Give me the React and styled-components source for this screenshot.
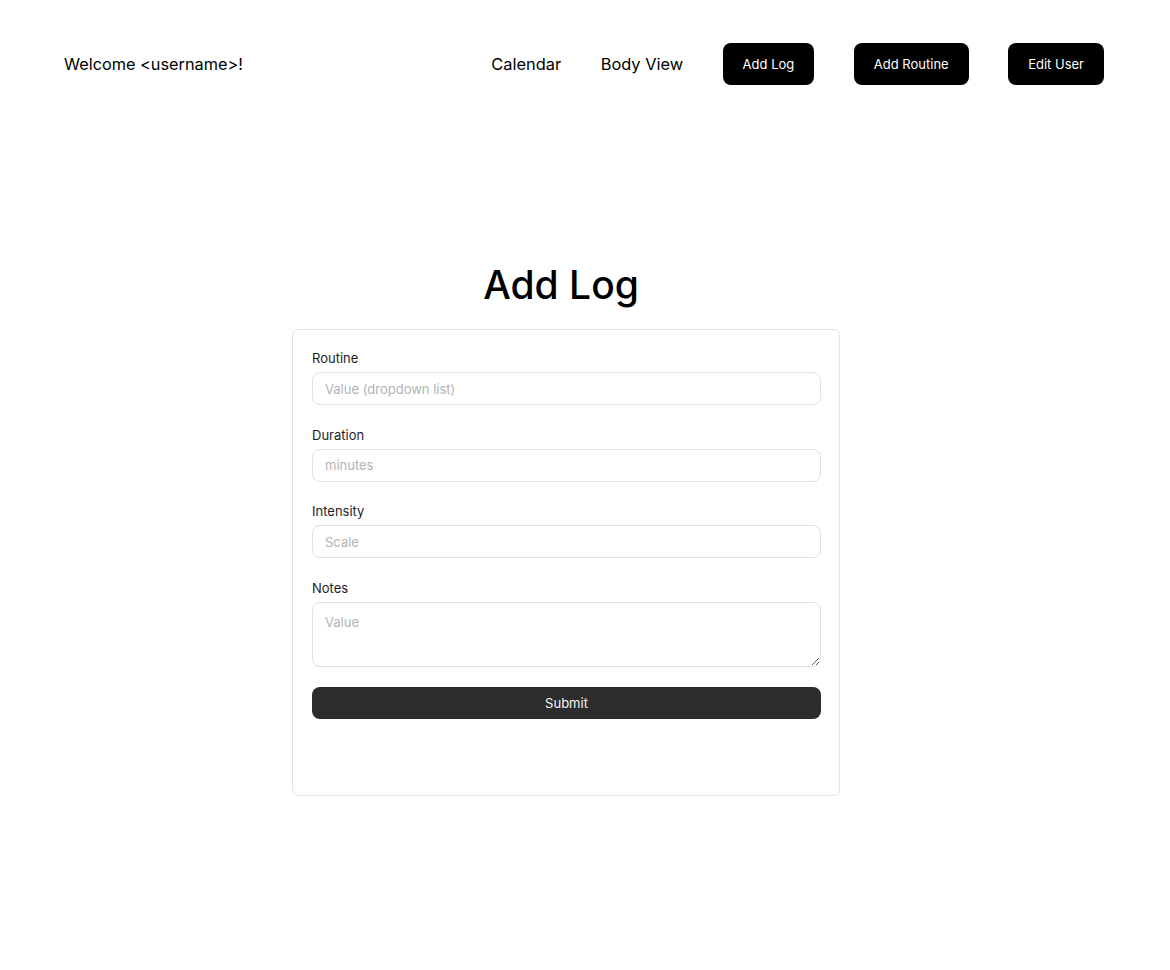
import React from 'react';
import styled, { createGlobalStyle } from 'styled-components';

const GlobalStyle = createGlobalStyle`
  * {
    box-sizing: border-box;
  }
  body {
    margin: 0;
    background: #ffffff;
    font-family: Inter, 'Noto Sans', sans-serif;
    color: #000000;
  }
`;

const Page = styled.div`
  width: 1170px;
  min-height: 970px;
  background: #ffffff;
`;

const Header = styled.header`
  display: flex;
  align-items: center;
  justify-content: space-between;
  height: 42px;
  margin-top: 43px;
  padding: 0 66px 0 64px;
`;

const Welcome = styled.span`
  font-size: 16.3px;
  line-height: 20px;
`;

const Nav = styled.nav`
  display: flex;
  align-items: center;
  gap: 39.5px;
`;

const NavLink = styled.a`
  font-size: 16.4px;
  line-height: 20px;
  color: #000000;
  text-decoration: none;
  cursor: pointer;
`;

const NavButton = styled.button`
  height: 42px;
  padding: 0 20px;
  border: none;
  border-radius: 8px;
  background: #000000;
  color: #ffffff;
  font-family: inherit;
  font-size: 13px;
  cursor: pointer;
`;

const Main = styled.main`
  display: flex;
  flex-direction: column;
  align-items: flex-start;
  margin-top: 176px;
  padding-left: 292px;
`;

const Title = styled.h1`
  width: 548px;
  margin: 0 0 20px;
  padding-right: 10px;
  text-align: center;
  font-size: 39px;
  line-height: 48px;
  font-weight: 500;
`;

const Card = styled.form`
  display: flex;
  flex-direction: column;
  width: 548px;
  height: 467px;
  padding: 18px 18px 0 19px;
  border: 1px solid #e3e3e3;
  border-radius: 6px;
`;

const Field = styled.div`
  display: flex;
  flex-direction: column;
  gap: 4px;
  margin-bottom: 19.67px;
`;

const Label = styled.label`
  font-size: 13px;
  line-height: 20px;
  color: #1e1e1e;
`;

const Input = styled.input`
  height: 33px;
  padding: 0 12px;
  border: 1px solid #e0e0e0;
  border-radius: 8px;
  font-family: inherit;
  font-size: 13px;
  color: #1e1e1e;
  outline: none;

  &::placeholder {
    color: #b3b3b3;
  }
`;

const TextArea = styled.textarea`
  height: 65px;
  padding: 11px 12px;
  border: 1px solid #e0e0e0;
  border-radius: 8px;
  font-family: inherit;
  font-size: 13px;
  line-height: 16px;
  color: #1e1e1e;
  outline: none;

  &::placeholder {
    color: #b3b3b3;
  }
`;

const Submit = styled.button`
  height: 32px;
  border: none;
  border-radius: 8px;
  background: #2c2c2c;
  color: #f5f5f5;
  font-family: inherit;
  font-size: 13px;
  cursor: pointer;
`;

const fields = [
  { id: 'routine', label: 'Routine', placeholder: 'Value (dropdown list)' },
  { id: 'duration', label: 'Duration', placeholder: 'minutes' },
  { id: 'intensity', label: 'Intensity', placeholder: 'Scale' },
];

const App = () => {
  return (
    <Page>
      <GlobalStyle />
      <Header>
        <Welcome>Welcome &lt;username&gt;!</Welcome>
        <Nav>
          <NavLink>Calendar</NavLink>
          <NavLink>Body View</NavLink>
          <NavButton>Add Log</NavButton>
          <NavButton>Add Routine</NavButton>
          <NavButton>Edit User</NavButton>
        </Nav>
      </Header>
      <Main>
        <Title>Add Log</Title>
        <Card onSubmit={(e) => e.preventDefault()}>
          {fields.map((f) => (
            <Field key={f.id}>
              <Label htmlFor={f.id}>{f.label}</Label>
              <Input id={f.id} placeholder={f.placeholder} />
            </Field>
          ))}
          <Field>
            <Label htmlFor='notes'>Notes</Label>
            <TextArea id='notes' placeholder='Value' />
          </Field>
          <Submit type='submit'>Submit</Submit>
        </Card>
      </Main>
    </Page>
  );
};

export default App;
